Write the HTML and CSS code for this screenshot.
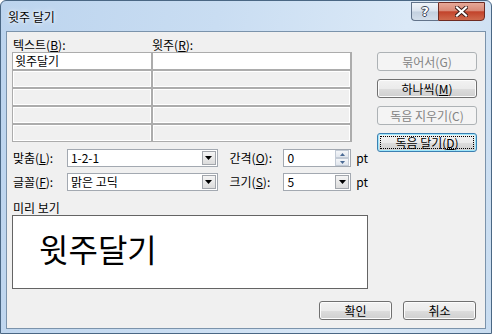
FILE: index.html
```html
<html>
    <head>
        <link rel="stylesheet" href="styles.css">
    </head>
    <body>
        <div class="window">
            <div class="titlebar">
                <span class="title">윗주 달기</span>
                <div class="caption">
                    <div class="cap help">?</div>
                    <div class="cap close">
                        <svg width="13" height="11" viewBox="0 0 13 11">
                            <path d="M2 1.5 L11 9.5 M11 1.5 L2 9.5" stroke="#3a1c18" stroke-width="4" stroke-linecap="square"/>
                            <path d="M2 1.5 L11 9.5 M11 1.5 L2 9.5" stroke="#ffffff" stroke-width="2.2" stroke-linecap="square"/>
                        </svg>
                    </div>
                </div>
            </div>
            <div class="client">
                <div class="main">
                    <div class="left">
                        <div class="col-labels">
                            <span class="col-a">텍스트(<u>B</u>):</span>
                            <span>윗주(<u>R</u>):</span>
                        </div>
                        <div class="grid">
                            <div class="cell first">윗주달기</div>
                            <div class="cell first"></div>
                            <div class="cell"></div>
                            <div class="cell"></div>
                            <div class="cell"></div>
                            <div class="cell"></div>
                            <div class="cell"></div>
                            <div class="cell"></div>
                            <div class="cell"></div>
                            <div class="cell"></div>
                        </div>
                        <div class="opt-row first-row">
                            <span class="opt-label">맞춤(<u>L</u>):</span>
                            <div class="combo wide">
                                <span class="combo-text">1-2-1</span>
                                <div class="drop"><svg width="7" height="4" viewBox="0 0 7 4"><path d="M0 0 H7 L3.5 4 Z" fill="#000"/></svg></div>
                            </div>
                            <span class="opt-label second">간격(<u>O</u>):</span>
                            <div class="combo narrow">
                                <span class="combo-text">0</span>
                                <div class="spin">
                                    <div class="spin-half"><svg width="5" height="3" viewBox="0 0 5 3"><path d="M2.5 0 L5 3 H0 Z" fill="#4a6a94"/></svg></div>
                                    <div class="spin-half"><svg width="5" height="3" viewBox="0 0 5 3"><path d="M0 0 H5 L2.5 3 Z" fill="#4a6a94"/></svg></div>
                                </div>
                            </div>
                            <span class="unit">pt</span>
                        </div>
                        <div class="opt-row">
                            <span class="opt-label">글꼴(<u>F</u>):</span>
                            <div class="combo wide">
                                <span class="combo-text">맑은 고딕</span>
                                <div class="drop"><svg width="7" height="4" viewBox="0 0 7 4"><path d="M0 0 H7 L3.5 4 Z" fill="#000"/></svg></div>
                            </div>
                            <span class="opt-label second">크기(<u>S</u>):</span>
                            <div class="combo narrow">
                                <span class="combo-text">5</span>
                                <div class="drop"><svg width="7" height="4" viewBox="0 0 7 4"><path d="M0 0 H7 L3.5 4 Z" fill="#000"/></svg></div>
                            </div>
                            <span class="unit">pt</span>
                        </div>
                        <div class="preview-label">미리 보기</div>
                        <div class="preview">윗주달기</div>
                    </div>
                    <div class="side">
                        <div class="btn disabled">묶어서(G)</div>
                        <div class="btn">하나씩(<u>M</u>)</div>
                        <div class="btn disabled">독음 지우기(C)</div>
                        <div class="btn default">독음 달기(<u>D</u>)</div>
                    </div>
                </div>
                <div class="footer">
                    <div class="btn small">확인</div>
                    <div class="btn small">취소</div>
                </div>
            </div>
        </div>
    </body>
</html>
```

FILE: styles.css
```css
body {
    margin: 0;
    font-family: "Noto Sans CJK KR", "Noto Sans", sans-serif;
    font-size: 12px;
    color: #000;
}
u {
    text-underline-offset: 1px;
}
.window {
    width: 492px;
    height: 334px;
    box-sizing: border-box;
    padding: 0 5px 4px 5px;
    border: 1px solid #4a6784;
    border-radius: 6px 6px 0 0;
    background: linear-gradient(100deg, #bcd4ee 0%, #c9ddf2 40%, #dbe9f7 75%, #c8dcf0 100%);
    display: flex;
    flex-direction: column;
    overflow: hidden;
}
.titlebar {
    height: 30px;
    display: flex;
    justify-content: space-between;
    flex-shrink: 0;
}
.title {
    margin: 9px 0 0 2px;
    line-height: 14px;
    text-shadow: 0 0 6px #fff, 0 0 3px #fff;
}
.caption {
    display: flex;
    margin: 1px 1px 0 0;
    height: 19px;
}
.cap {
    height: 19px;
    box-sizing: border-box;
    display: flex;
    align-items: center;
    justify-content: center;
}
.help {
    width: 27px;
    border: 1px solid #62738a;
    border-right: none;
    border-radius: 0 0 0 4px;
    background: linear-gradient(#f0f4f9 0%, #dae3ee 48%, #c3d0df 52%, #d3deea 100%);
    color: #fff;
    font-family: "DejaVu Sans", sans-serif;
    font-weight: bold;
    font-size: 13px;
    text-shadow: 1px 0 0 #3b4658, -1px 0 0 #3b4658, 0 1px 0 #3b4658, 0 -1px 0 #3b4658;
}
.close {
    width: 47px;
    border: 1px solid #6e2b22;
    border-radius: 0 0 4px 0;
    background: linear-gradient(#e6a898 0%, #d98a77 45%, #c2432b 52%, #cf6a4d 100%);
}
.client {
    flex: 1;
    border: 1px solid #7b93ab;
    background: #f0f0f0;
    display: flex;
    flex-direction: column;
}
.main {
    display: flex;
    padding: 6px 8px 0 5px;
}
.left {
    width: 356px;
}
.col-labels {
    display: flex;
    height: 14px;
    line-height: 14px;
    padding-left: 1px;
}
.col-a {
    width: 139px;
}
.grid {
    display: grid;
    grid-template-columns: 138px 197px;
    grid-auto-rows: 16px;
    gap: 2px;
    padding: 1px;
    width: 340px;
    box-sizing: border-box;
    background: #acacac;
}
.cell {
    background: #f0f0f0;
    border: 1px solid #fff;
    line-height: 14px;
    padding-left: 1px;
}
.cell.first {
    background: #fff;
}
.opt-row {
    display: flex;
    align-items: center;
    height: 18px;
    margin-top: 6px;
}
.opt-row.first-row {
    margin-top: 7px;
}
.opt-label {
    width: 55px;
    box-sizing: border-box;
    padding-left: 1px;
    line-height: 14px;
}
.opt-label.second {
    margin-left: 11px;
}
.combo {
    height: 18px;
    box-sizing: border-box;
    border: 1px solid #a3a9b1;
    background: #fff;
    display: flex;
    align-items: center;
    padding-left: 3px;
}
.combo.wide {
    width: 151px;
}
.combo.narrow {
    width: 68px;
}
.combo-text {
    flex: 1;
    line-height: 14px;
}
.drop {
    width: 14px;
    height: 14px;
    box-sizing: border-box;
    margin-right: 1px;
    border: 1px solid #a2a6ac;
    background: linear-gradient(#f5f5f5, #dcdcdc);
    display: flex;
    align-items: center;
    justify-content: center;
}
.spin {
    width: 14px;
    height: 16px;
    margin-right: 1px;
    display: flex;
    flex-direction: column;
}
.spin-half {
    flex: 1;
    border: 1px solid #c3cbd6;
    background: linear-gradient(#f4f6f9, #e1e6ed);
    display: flex;
    align-items: center;
    justify-content: center;
}
.unit {
    margin-left: 5px;
    line-height: 14px;
}
.preview-label {
    margin-top: 10px;
    line-height: 14px;
    padding-left: 1px;
}
.preview {
    height: 74px;
    box-sizing: border-box;
    border: 1px solid #646464;
    background: #fff;
    font-size: 32px;
    line-height: 32px;
    padding: 16px 0 0 26px;
}
.side {
    margin-left: 9px;
    margin-top: 14px;
    width: 100px;
    display: flex;
    flex-direction: column;
    gap: 8px;
}
.btn {
    position: relative;
    height: 19px;
    box-sizing: border-box;
    border: 1px solid #707070;
    border-radius: 3px;
    background: linear-gradient(#f2f2f2 0%, #ebebeb 50%, #dddddd 51%, #cfcfcf 100%);
    box-shadow: inset 0 0 0 1px #fcfcfc;
    display: flex;
    align-items: center;
    justify-content: center;
    line-height: 14px;
}
.btn.disabled {
    border-color: #adb2b5;
    background: #f4f4f4;
    box-shadow: none;
    color: #838383;
}
.btn.default {
    border-color: #3c7fb1;
    box-shadow: inset 0 0 0 1px #9fe7fb;
}
.btn.default::after {
    content: "";
    position: absolute;
    left: 2px;
    right: 2px;
    top: 2px;
    bottom: 2px;
    border: 1px dotted #000;
}
.footer {
    display: flex;
    justify-content: flex-end;
    gap: 11px;
    margin-top: 12px;
    padding-right: 9px;
}
.btn.small {
    width: 73px;
}
```
